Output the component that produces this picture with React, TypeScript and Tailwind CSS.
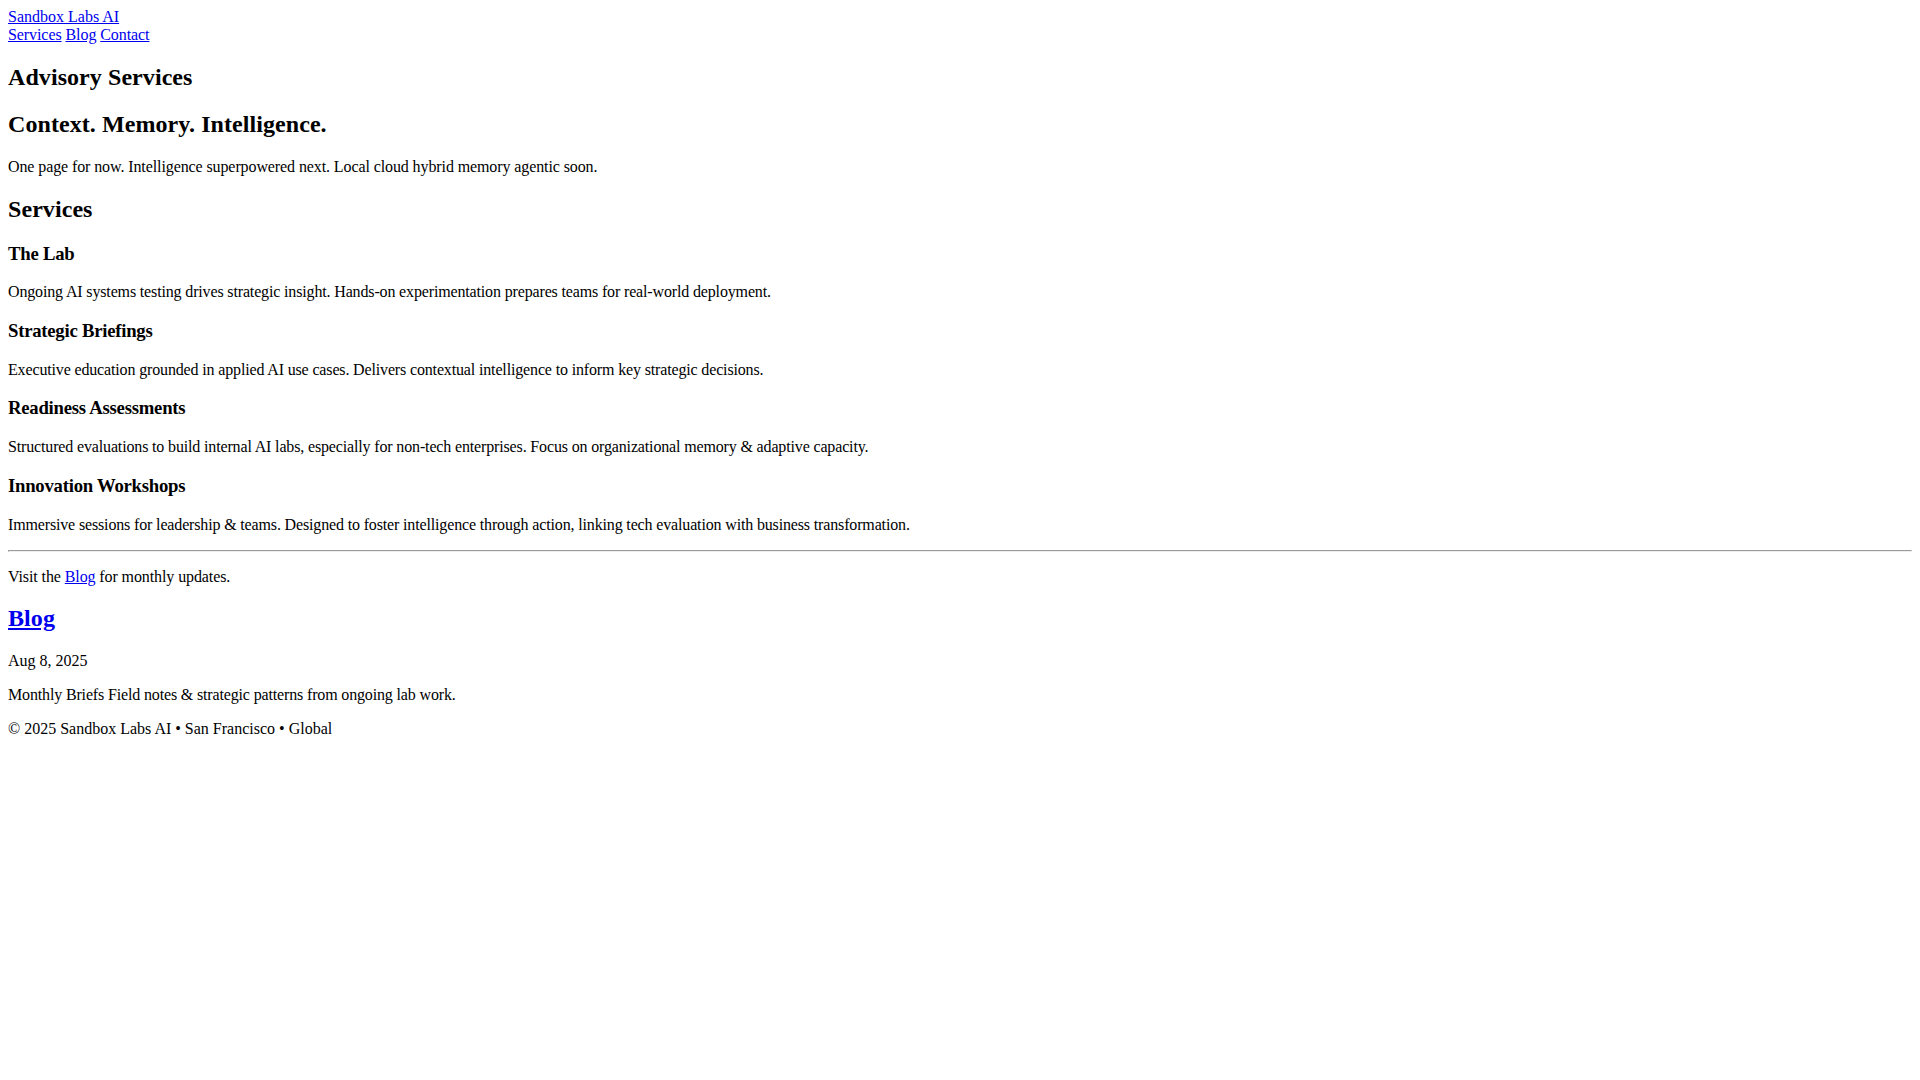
import React from "react";

const link = "text-[#0000ee] underline";
const h2 = "text-[24px] font-bold my-[19.92px] leading-[normal] tracking-[0.07px]";
const h3 = "text-[18.72px] font-bold my-[18.72px] leading-[normal] tracking-[-0.24px]";
const p = "my-4 leading-[normal] tracking-[-0.15px]";
const pLight = "my-4 leading-[normal] tracking-[-0.1px]";
const pPlain = "my-4 leading-[normal]";

export default function App() {
  return (
    <div className="font-['Liberation_Serif','Times_New_Roman',serif] text-[16px] leading-[normal] text-black bg-white min-h-screen p-2 flow-root">
      <header>
        <a href="#" className={link}>Sandbox Labs AI</a>
        <nav className="tracking-[-0.08px]">
          <a href="#" className={link}>Services</a>{" "}
          <a href="#" className={link}>Blog</a>{" "}
          <a href="#" className={link}>Contact</a>
        </nav>
      </header>
      <main>
        <section>
          <h2 className={h2}>Advisory Services</h2>
          <h2 className={h2}>Context. Memory. Intelligence.</h2>
          <p className={pLight}>One page for now. Intelligence superpowered next. Local cloud hybrid memory agentic soon.</p>
        </section>
        <section>
          <h2 className={h2}>Services</h2>
          <h3 className={h3}>The Lab</h3>
          <p className={p}>Ongoing AI systems testing drives strategic insight. Hands-on experimentation prepares teams for real-world deployment.</p>
          <h3 className={h3}>Strategic Briefings</h3>
          <p className={p}>Executive education grounded in applied AI use cases. Delivers contextual intelligence to inform key strategic decisions.</p>
          <h3 className={h3}>Readiness Assessments</h3>
          <p className={p}>Structured evaluations to build internal AI labs, especially for non-tech enterprises. Focus on organizational memory &amp; adaptive capacity.</p>
          <h3 className={h3}>Innovation Workshops</h3>
          <p className={p}>Immersive sessions for leadership &amp; teams. Designed to foster intelligence through action, linking tech evaluation with business transformation.</p>
        </section>
        <hr className="h-0 my-2 border border-t-[#9a9a9a] border-l-[#9a9a9a] border-b-[#eeeeee] border-r-[#eeeeee]" />
        <p className={pLight}>
          Visit the <a href="#" className={link}>Blog</a> for monthly updates.
        </p>
        <section>
          <h2 className={h2}>
            <a href="#" className={link}>Blog</a>
          </h2>
          <p className={pPlain}>Aug 8, 2025</p>
          <p className={p}>Monthly Briefs Field notes &amp; strategic patterns from ongoing lab work.</p>
        </section>
      </main>
      <footer>
        <p className={pPlain}>© 2025 Sandbox Labs AI • San Francisco • Global</p>
      </footer>
    </div>
  );
}
